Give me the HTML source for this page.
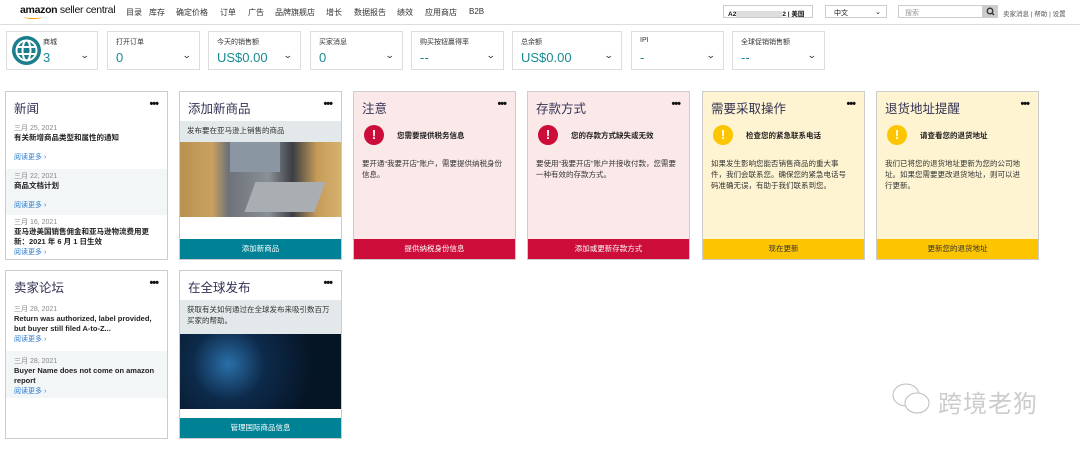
<!DOCTYPE html>
<html><head><meta charset="utf-8"><style>
*{box-sizing:border-box;margin:0;padding:0}
body{width:1080px;height:449px;background:#fff;font-family:"Liberation Sans","Noto Sans CJK SC",sans-serif;position:relative;overflow:hidden;color:#111}
.abs{position:absolute}
.nav{font-size:8px;color:#333;top:7px}
.box{position:absolute;top:31px;height:39px;border:1px solid #ddd;background:#fff}
.box .l{position:absolute;left:8px;top:5px;font-size:7px;color:#333}
.box .v{position:absolute;left:8px;top:18px;font-size:13px;color:#188a94}
.box .c{position:absolute;right:8px;top:18px;font-size:9px;color:#333;transform:scaleX(1.3)}
.card{position:absolute;border:1px solid #ccc;background:#fff}
.card h2{position:absolute;left:8px;top:6px;font-size:12.5px;font-weight:normal;color:#335;}
.card .dots{position:absolute;right:9px;top:8px;font-size:11px;font-weight:bold;letter-spacing:-1px;line-height:8px}
.btn{position:absolute;left:0;right:0;bottom:0;height:20px;font-size:7.5px;text-align:center;line-height:20px;color:#fff}
.sub{position:absolute;left:0;right:0;top:29px;height:16px;background:#e3e9ea;font-size:7.5px;padding:4px 7px;color:#333}
.ic{position:absolute;left:10px;top:33px;width:20px;height:20px;border-radius:50%;color:#fff;font-weight:bold;font-size:13px;text-align:center;line-height:20px}
.it{position:absolute;left:43px;top:38px;font-size:7.5px;font-weight:bold;color:#222}
.bd{position:absolute;left:8px;top:66px;right:12px;font-size:7.5px;line-height:11px;color:#333}
.n{position:absolute;left:0;right:0;padding:0 8px;font-size:7px}
.n .d{color:#888}.n .t{font-weight:bold;color:#222;font-size:7.5px;line-height:10px}.n .r{color:#2a7bd0}
</style></head><body>
<div class="abs" style="left:20px;top:4px;font-size:10.5px;letter-spacing:-0.3px"><b>amazon</b> seller central</div>
<div class="abs" style="left:24px;top:15px;width:18px;height:4px;border-bottom:1.5px solid #f90;border-radius:0 0 50% 50%"></div>
<div class="abs nav" style="left:126px">目录</div>
<div class="abs nav" style="left:149px">库存</div>
<div class="abs nav" style="left:176px">确定价格</div>
<div class="abs nav" style="left:220px">订单</div>
<div class="abs nav" style="left:248px">广告</div>
<div class="abs nav" style="left:275px">品牌旗舰店</div>
<div class="abs nav" style="left:326px">增长</div>
<div class="abs nav" style="left:354px">数据报告</div>
<div class="abs nav" style="left:397px">绩效</div>
<div class="abs nav" style="left:425px">应用商店</div>
<div class="abs nav" style="left:469px">B2B</div>
<div class="abs" style="left:0;right:0;top:24px;border-top:1px solid #ddd"></div>
<div class="abs" style="left:723px;top:5px;width:90px;height:13px;border:1px solid #ccc;font-size:6.5px;padding:2px 4px;white-space:nowrap;overflow:hidden"><b>A2</b><span style="display:inline-block;width:46px;height:7px;background:#ddd;vertical-align:middle"></span><b>2 | 美国</b></div>
<div class="abs" style="left:825px;top:5px;width:62px;height:13px;border:1px solid #ccc;font-size:7px;padding:2px 8px">中文<span style="position:absolute;right:5px">⌄</span></div>
<div class="abs" style="left:898px;top:5px;width:85px;height:13px;border:1px solid #ccc;font-size:7px;color:#999;padding:2px 6px;background:#fff">搜索</div>
<div class="abs" style="left:983px;top:5px;width:15px;height:13px;background:#ccc"><svg width="15" height="13"><circle cx="7" cy="6" r="2.8" fill="none" stroke="#333" stroke-width="1.3"/><line x1="9" y1="8" x2="11" y2="10" stroke="#333" stroke-width="1.3"/></svg></div>
<div class="abs" style="left:1003px;top:8px;font-size:6.5px;color:#555">卖家消息 | 帮助 | 设置</div>

<div class="box" style="left:6px;width:92px"><div class="abs" style="left:5px;top:4px;width:29px;height:29px;border-radius:50%;background:#1a7f8c"><svg width="29" height="29" viewBox="0 0 29 29"><g fill="none" stroke="#fff" stroke-width="2"><circle cx="14.5" cy="14.5" r="10"/><ellipse cx="14.5" cy="14.5" rx="4" ry="10"/><line x1="4.5" y1="11" x2="24.5" y2="11"/><line x1="4.5" y1="18" x2="24.5" y2="18"/></g></svg></div><div class="l" style="left:36px">商城</div><div class="v" style="left:36px">3</div><div class="c">⌄</div></div>
<div class="box" style="left:107px;width:93px"><div class="l">打开订单</div><div class="v">0</div><div class="c">⌄</div></div>
<div class="box" style="left:208px;width:93px"><div class="l">今天的销售额</div><div class="v">US$0.00</div><div class="c">⌄</div></div>
<div class="box" style="left:310px;width:93px"><div class="l">买家消息</div><div class="v">0</div><div class="c">⌄</div></div>
<div class="box" style="left:411px;width:93px"><div class="l">购买按钮赢得率</div><div class="v">--</div><div class="c">⌄</div></div>
<div class="box" style="left:512px;width:110px"><div class="l">总余额</div><div class="v">US$0.00</div><div class="c">⌄</div></div>
<div class="box" style="left:631px;width:93px"><div class="l">IPI</div><div class="v">-</div><div class="c">⌄</div></div>
<div class="box" style="left:732px;width:93px"><div class="l">全球促销销售额</div><div class="v">--</div><div class="c">⌄</div></div>

<div class="card" style="left:5px;top:91px;width:163px;height:169px"><h2>新闻</h2><div class="dots">•••</div>
<div class="n" style="top:31px;height:46px"><div class="d">三月 25, 2021</div><div class="t">有关新增商品类型和属性的通知</div><div class="r" style="margin-top:9px">阅读更多 ›</div></div>
<div class="n" style="top:77px;height:46px;background:#f2f6f7;padding-top:2px"><div class="d">三月 22, 2021</div><div class="t">商品文档计划</div><div class="r" style="margin-top:9px">阅读更多 ›</div></div>
<div class="n" style="top:124px;padding-top:1px"><div class="d">三月 16, 2021</div><div class="t">亚马逊美国销售佣金和亚马逊物流费用更新：2021 年 6 月 1 日生效</div><div class="r">阅读更多 ›</div></div>
</div>
<div class="card" style="left:179px;top:91px;width:163px;height:169px"><h2>添加新商品</h2><div class="dots">•••</div>
<div class="sub" style="height:22px">发布要在亚马逊上销售的商品</div>
<div class="abs" style="left:0;right:0;top:50px;height:75px;background:linear-gradient(90deg,#b8924f 0,#c9a060 20%,#6d7278 30%,#8a9097 55%,#3b3f44 70%,#c69b58 85%,#d7b170 100%)"><div class="abs" style="left:50px;top:0;width:50px;height:30px;background:#8a97a3"></div><div class="abs" style="left:70px;top:40px;width:70px;height:30px;background:#a9aeb3;transform:skewX(-20deg)"></div></div>
<div class="btn" style="background:#008296">添加新商品</div></div>
<div class="card" style="left:353px;top:91px;width:163px;height:169px;background:#fbe9e9"><h2>注意</h2><div class="dots">•••</div>
<div class="ic" style="background:#cc0c39">!</div><div class="it">您需要提供税务信息</div>
<div class="bd">要开通“我要开店”账户，需要提供纳税身份信息。</div>
<div class="btn" style="background:#cc0c39">提供纳税身份信息</div></div>
<div class="card" style="left:527px;top:91px;width:163px;height:169px;background:#fbe9e9"><h2>存款方式</h2><div class="dots">•••</div>
<div class="ic" style="background:#cc0c39">!</div><div class="it">您的存款方式缺失或无效</div>
<div class="bd">要使用“我要开店”账户并接收付款，您需要一种有效的存款方式。</div>
<div class="btn" style="background:#cc0c39">添加或更新存款方式</div></div>
<div class="card" style="left:702px;top:91px;width:163px;height:169px;background:#fef4d2"><h2>需要采取操作</h2><div class="dots">•••</div>
<div class="ic" style="background:#fcc500">!</div><div class="it">检查您的紧急联系电话</div>
<div class="bd">如果发生影响您能否销售商品的重大事件，我们会联系您。确保您的紧急电话号码准确无误，有助于我们联系到您。</div>
<div class="btn" style="background:#fcc500;color:#333">现在更新</div></div>
<div class="card" style="left:876px;top:91px;width:163px;height:169px;background:#fef4d2"><h2>退货地址提醒</h2><div class="dots">•••</div>
<div class="ic" style="background:#fcc500">!</div><div class="it">请查看您的退货地址</div>
<div class="bd">我们已将您的退货地址更新为您的公司地址。如果您需要更改退货地址，则可以进行更新。</div>
<div class="btn" style="background:#fcc500;color:#333">更新您的退货地址</div></div>
<div class="card" style="left:5px;top:270px;width:163px;height:169px"><h2>卖家论坛</h2><div class="dots">•••</div>
<div class="n" style="top:33px;height:47px"><div class="d">三月 28, 2021</div><div class="t">Return was authorized, label provided, but buyer still filed A-to-Z...</div><div class="r">阅读更多 ›</div></div>
<div class="n" style="top:80px;height:47px;background:#f2f6f7;padding-top:5px"><div class="d">三月 28, 2021</div><div class="t">Buyer Name does not come on amazon report</div><div class="r">阅读更多 ›</div></div>
</div>
<div class="card" style="left:179px;top:270px;width:163px;height:169px"><h2>在全球发布</h2><div class="dots">•••</div>
<div class="sub" style="top:29px;height:34px;line-height:11px">获取有关如何通过在全球发布来吸引数百万买家的帮助。</div>
<div class="abs" style="left:0;right:0;top:63px;height:75px;background:radial-gradient(circle at 30% 40%,#2a6fa8 0,#0d2a4a 30%,#061526 70%)"></div>
<div class="btn" style="background:#008296">管理国际商品信息</div></div>
<div class="abs" style="left:938px;top:384px;font-size:24px;color:#ccc;letter-spacing:1px">跨境老狗</div>
<svg class="abs" style="left:890px;top:381px" width="46" height="36"><g fill="#fff" stroke="#bbb"><ellipse cx="16" cy="14" rx="13" ry="11"/><ellipse cx="27" cy="22" rx="12" ry="10"/></g></svg>
</body></html>
